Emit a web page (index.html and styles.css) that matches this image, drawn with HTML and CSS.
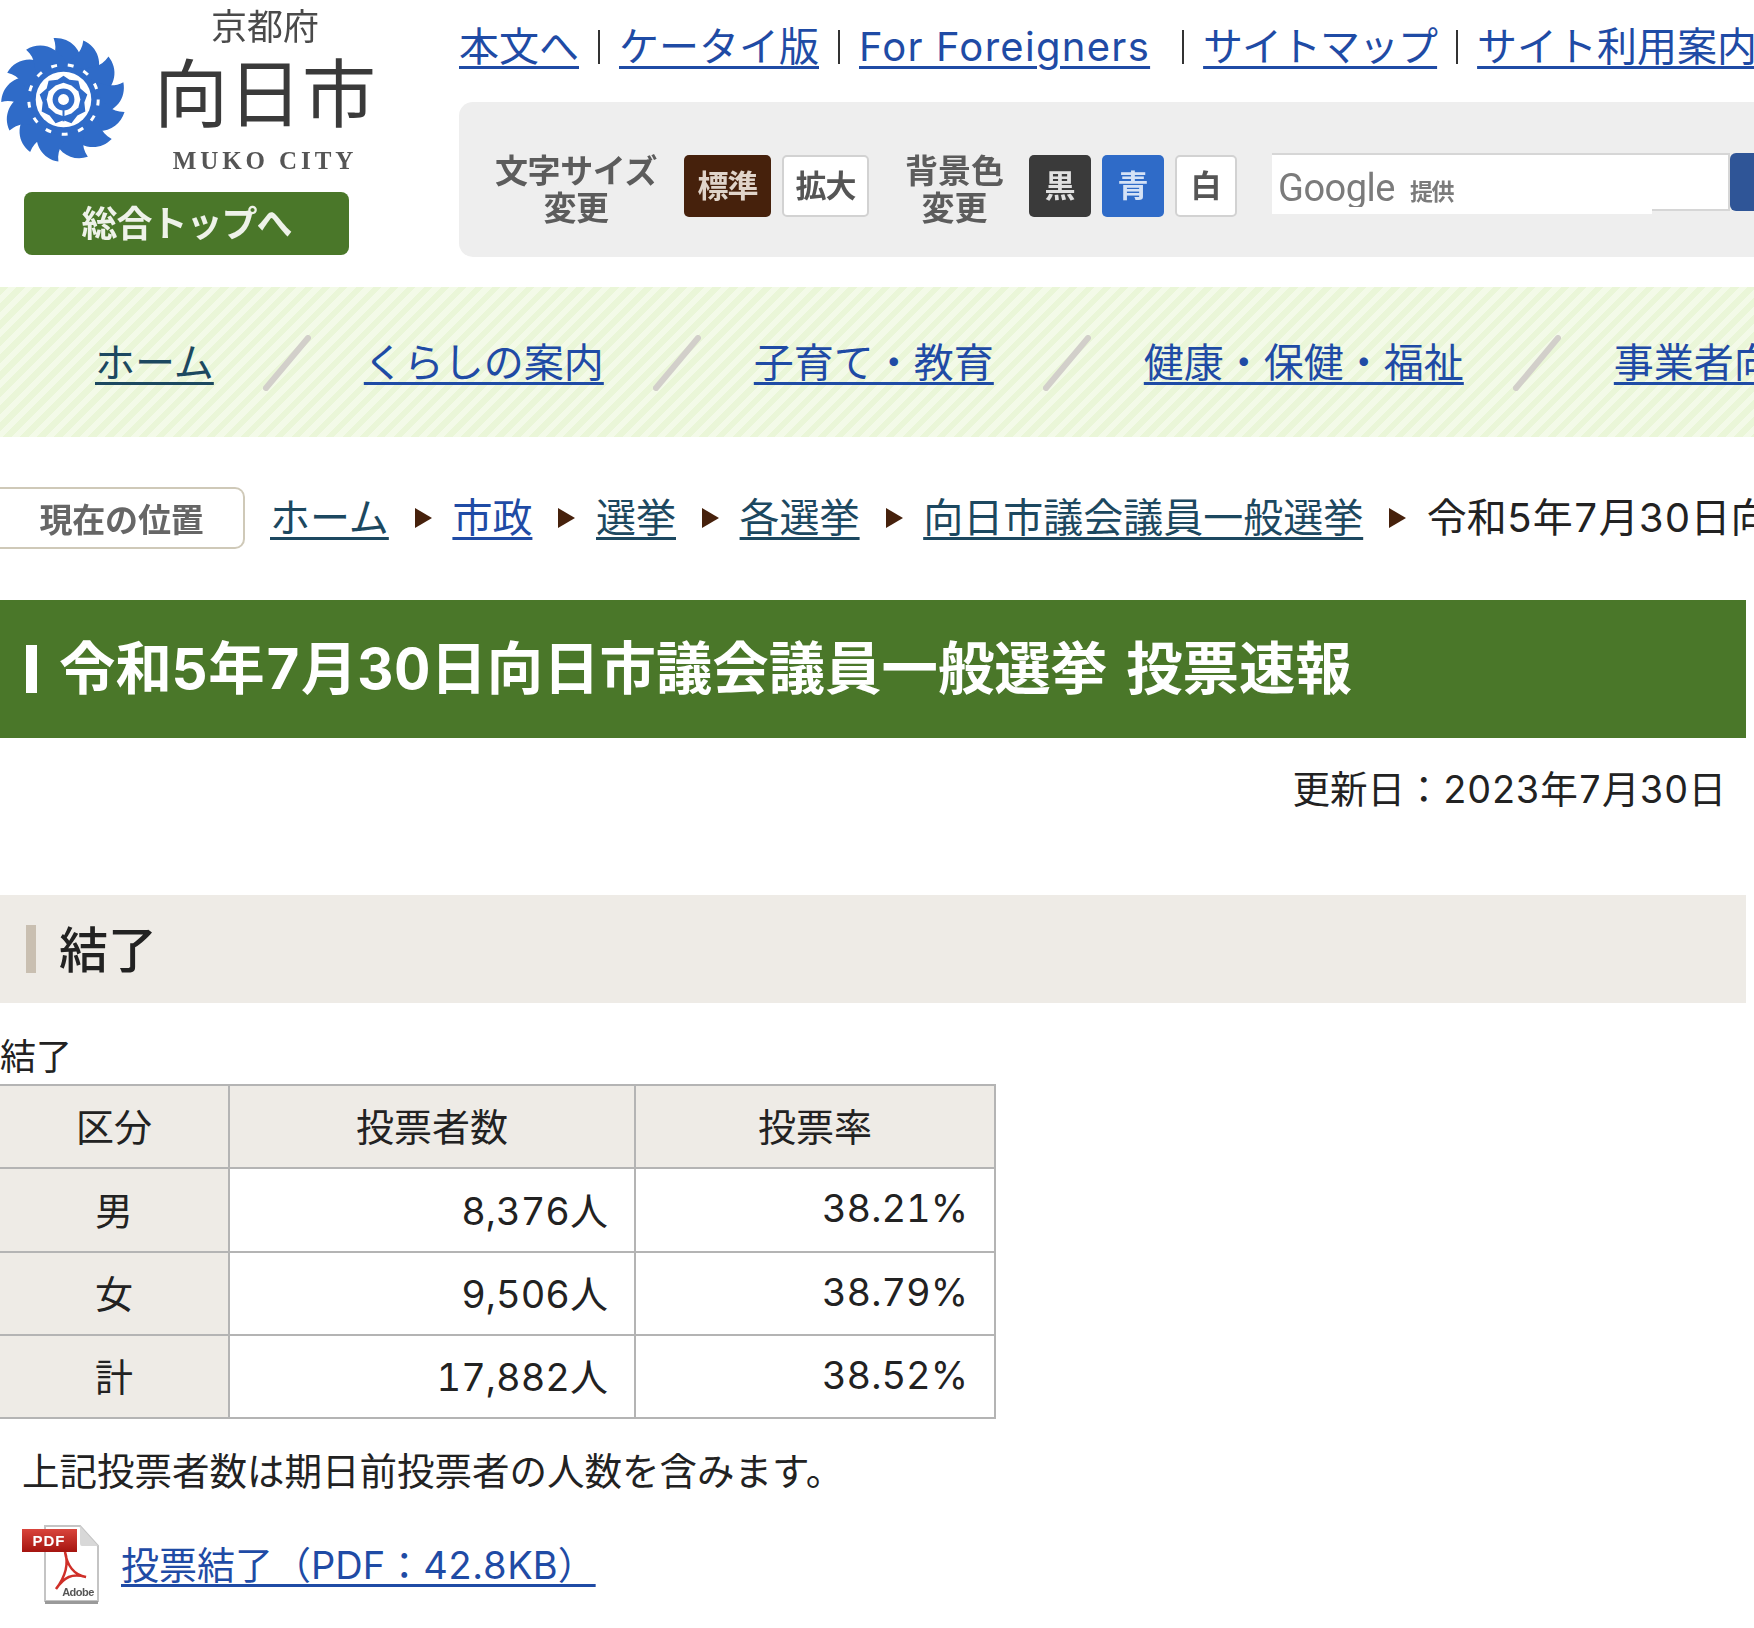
FILE: index.html
```html
<!DOCTYPE html>
<html lang="ja">
<head>
<meta charset="utf-8">
<title>令和5年7月30日向日市議会議員一般選挙 投票速報</title>
<link rel="stylesheet" href="styles.css">
</head>
<body>
<div class="page">
  <header class="header">
    <div class="logo-col">
      <div class="logo">
        <svg class="gear" viewBox="-64 -64 128 128" aria-hidden="true">
          <defs>
            <path id="tooth" d="M-17 -30 C-11 -40 -5 -49 -10 -62 C6 -63 19 -52 20 -30 Z"/>
          </defs>
          <g fill="#2f6bc8">
            <circle r="40"/>
            <use href="#tooth"/>
            <use href="#tooth" transform="rotate(27.69)"/>
            <use href="#tooth" transform="rotate(55.38)"/>
            <use href="#tooth" transform="rotate(83.08)"/>
            <use href="#tooth" transform="rotate(110.77)"/>
            <use href="#tooth" transform="rotate(138.46)"/>
            <use href="#tooth" transform="rotate(166.15)"/>
            <use href="#tooth" transform="rotate(193.85)"/>
            <use href="#tooth" transform="rotate(221.54)"/>
            <use href="#tooth" transform="rotate(249.23)"/>
            <use href="#tooth" transform="rotate(276.92)"/>
            <use href="#tooth" transform="rotate(304.62)"/>
            <use href="#tooth" transform="rotate(332.31)"/>
          </g>
          <circle class="gear-ticks" r="35"/>
          <circle r="32" fill="#2f6bc8"/>
          <circle r="28" fill="#fff"/>
          <polygon points="0,-24 6,-20 15,-19 17,-11 24,-5 21,3 22,12 14,16 8,24 0,21 -8,24 -14,16 -22,12 -21,3 -24,-5 -17,-11 -15,-19 -6,-20" fill="#2f6bc8"/>
          <polygon points="0,-17 8,-14 15,-8 17,0 15,8 8,14 0,17 -8,14 -15,8 -17,0 -15,-8 -8,-14" fill="#fff"/>
          <rect x="-1" y="10" width="2" height="12" fill="#2f6bc8"/>
          <circle r="11" fill="#2f6bc8"/>
          <circle r="5.5" fill="#fff"/>
        </svg>
        <div class="logo-text">
          <span class="logo-pref">京都府</span>
          <span class="logo-city">向日市</span>
          <span class="logo-en">MUKO CITY</span>
        </div>
      </div>
      <a class="top-btn">総合トップへ</a>
    </div>
    <div class="header-main">
      <ul class="util">
        <li><a href="#">本文へ</a></li>
        <li class="sep"></li>
        <li><a href="#">ケータイ版</a></li>
        <li class="sep"></li>
        <li class="foreign"><a href="#">For Foreigners</a></li>
        <li class="sep"></li>
        <li class="tight"><a href="#">サイトマップ</a></li>
        <li class="sep"></li>
        <li class="nowrap"><a href="#">サイト利用案内</a></li>
      </ul>
      <div class="tools">
        <div class="tool-label size-label">文字サイズ<br>変更</div>
        <button class="tbtn t-brown">標準</button>
        <button class="tbtn t-white">拡大</button>
        <div class="tool-label color-label">背景色<br>変更</div>
        <button class="cbtn t-black">黒</button>
        <button class="cbtn t-blue">青</button>
        <button class="cbtn t-white">白</button>
        <div class="search">
          <div class="search-box"><span class="google">Google</span><span class="teikyo">提供</span></div>
          <div class="search-go"></div>
        </div>
      </div>
    </div>
  </header>

  <nav class="gnav">
    <a class="home" href="#">ホーム</a>
    <svg class="slash" viewBox="0 0 48 56" aria-hidden="true"><line x1="3" y1="53" x2="45" y2="3"/></svg>
    <a href="#">くらしの案内</a>
    <svg class="slash" viewBox="0 0 48 56" aria-hidden="true"><line x1="3" y1="53" x2="45" y2="3"/></svg>
    <a href="#">子育て・教育</a>
    <svg class="slash" viewBox="0 0 48 56" aria-hidden="true"><line x1="3" y1="53" x2="45" y2="3"/></svg>
    <a href="#">健康・保健・福祉</a>
    <svg class="slash" viewBox="0 0 48 56" aria-hidden="true"><line x1="3" y1="53" x2="45" y2="3"/></svg>
    <a href="#">事業者向け</a>
  </nav>

  <div class="crumbs">
    <span class="here">現在の位置</span>
    <a class="dark" href="#">ホーム</a><i class="tri"></i>
    <a href="#">市政</a><i class="tri"></i>
    <a class="dark" href="#">選挙</a><i class="tri"></i>
    <a class="dark" href="#">各選挙</a><i class="tri"></i>
    <a class="dark" href="#">向日市議会議員一般選挙</a><i class="tri"></i>
    <span class="cur">令和5年7月30日向日市議会議員一般選挙 投票速報</span>
  </div>

  <main class="content">
    <h1 class="title"><span class="title-bar"></span>令和5年7月30日向日市議会議員一般選挙 投票速報</h1>
    <p class="date">更新日：2023年7月30日</p>
    <h2 class="section"><span class="section-bar"></span>結了</h2>
    <p class="caption">結了</p>
    <table class="result">
      <thead>
        <tr><th class="c1">区分</th><th class="c2">投票者数</th><th class="c3">投票率</th></tr>
      </thead>
      <tbody>
        <tr class="row-tall"><th>男</th><td>8,376人</td><td>38.21%</td></tr>
        <tr><th>女</th><td>9,506人</td><td>38.79%</td></tr>
        <tr><th>計</th><td>17,882人</td><td>38.52%</td></tr>
      </tbody>
    </table>
    <p class="note">上記投票者数は期日前投票者の人数を含みます。</p>
    <p class="file">
      <svg class="pdf" viewBox="0 0 80 80" aria-hidden="true">
        <defs>
          <linearGradient id="red" x1="0" y1="0" x2="0" y2="1"><stop offset="0" stop-color="#d9453c"/><stop offset="1" stop-color="#a5140f"/></linearGradient>
        </defs>
        <path d="M25 1 H60 L78 21 V76 H25 Z" fill="#fff" stroke="#c4c4c4" stroke-width="2"/>
        <rect x="25" y="76" width="53" height="3" fill="#9a9a9a"/>
        <path d="M60 1 L78 21 H62 Q60 21 60 18 Z" fill="#d8d8d8"/>
        <path d="M45 27 C50 42 42 56 36 64 C44 52 52 48 66 52 C54 50 47 40 45 27 Z" fill="none" stroke="#cf2f28" stroke-width="2.5"/>
        <rect x="2" y="4" width="55" height="23" fill="url(#red)"/>
        <text class="pdf-t" x="29" y="21" text-anchor="middle">PDF</text>
        <text class="adobe-t" x="58" y="71" text-anchor="middle">Adobe</text>
      </svg>
      <a href="#">投票結了（PDF：42.8KB）</a>
    </p>
  </main>
</div>
</body>
</html>
```
FILE: styles.css
```css
* { box-sizing: border-box; }
html, body { margin: 0; padding: 0; background: #fff; }
body {
  font-family: "Inter", "Noto Sans CJK JP", sans-serif;
  font-variant-numeric: tabular-nums;
  color: #222;
}
.page { width: 1754px; height: 1628px; overflow: hidden; }
a { color: #1f4ba5; text-decoration: underline; text-decoration-thickness: 3px; text-underline-offset: 5px; }

.header { display: flex; height: 287px; }
.logo-col { width: 459px; flex: none; display: flex; flex-direction: column; }
.logo { display: flex; height: 192px; }
.gear { width: 127px; height: 127px; margin: 36px 0 0; flex: none; filter: blur(.5px); }
.gear-ticks { fill: none; stroke: #fff; stroke-width: 3; stroke-dasharray: 6 10.9; }
.logo-text { display: flex; flex-direction: column; align-items: center; width: 222px; margin-left: 27px; color: #3a3a3a; }
.logo-pref { font-size: 36px; line-height: 40px; margin-top: 7px; font-weight: 400; color: #4a4a4a; filter: blur(.4px); }
.logo-city { font-size: 74px; line-height: 84px; margin-top: 5px; font-weight: 400; filter: blur(.4px); }
.logo-en { font-family: "Liberation Serif", serif; font-weight: 700; font-size: 25px; letter-spacing: 3.9px; line-height: 26px; margin-top: 12px; color: #555; filter: blur(.4px); }
.top-btn {
  display: block; width: 325px; height: 63px; margin-left: 24px; border-radius: 8px;
  background: #4a7729; color: #eef2e9; font-size: 36px; font-weight: 700; line-height: 64px;
  text-align: center; text-decoration: none; letter-spacing: -1px; filter: blur(.4px);
}

.header-main { flex: 1; min-width: 0; }
.util { list-style: none; margin: 0; padding: 26px 0 0; display: flex; gap: 19px; font-size: 40px; line-height: 42px; height: 102px; white-space: nowrap; }
.util .sep { width: 2px; height: 34px; margin-top: 4px; background: #333; flex: none; }
.util .foreign { margin-right: 13px; letter-spacing: 1.3px; }
.util .tight { letter-spacing: -1px; }
.nowrap { flex: none; }

.tools { display: flex; align-items: flex-start; height: 155px; background: #eee; border-radius: 14px 0 0 14px; padding: 53px 0 0 35px; color: #444; }
.tool-label { font-size: 33px; line-height: 37px; text-align: center; font-weight: 700; color: #5c5c5c; filter: blur(.5px); flex: none; margin-top: -2px; }
.size-label { width: 164px; letter-spacing: -.4px; }
.color-label { width: 99px; margin-left: 36px; }
button { font-family: inherit; padding: 0 0 5px; flex: none; cursor: pointer; }
.tbtn, .cbtn { height: 62px; border-radius: 5px; font-size: 31px; font-weight: 700; filter: blur(.4px); }
.tbtn { width: 87px; margin-left: 26px; letter-spacing: -1px; }
.tbtn + .tbtn { margin-left: 11px; }
.cbtn { width: 62px; margin-left: 11px; }
.color-label + .cbtn { margin-left: 25px; }
.t-brown { background: #46210c; color: #e0d4ca; border: 0; }
.t-white { background: #fff; color: #555; border: 2px solid #d2d2d2; }
.t-black { background: #3a3a3a; color: #e0e0e0; border: 0; }
.t-blue { background: #2f6bc8; color: #d5e2f6; border: 0; }

.search { display: flex; margin-left: 35px; flex: none; }
.search-box {
  position: relative;
  width: 458px; height: 58px; background: #fff; border: solid #d6d6d6; border-width: 2px 2px 2px 0;
  display: flex; align-items: center; padding: 12px 0 0 6px; color: #7b7b7b; margin-top: -2px;
}
.search-box::after { content: ""; position: absolute; left: 0; bottom: -5px; width: 380px; height: 7px; background: #fff; }
.google { font-family: "Roboto", sans-serif; font-size: 38px; letter-spacing: -.5px; filter: blur(.4px); }
.teikyo { font-size: 23px; font-weight: 700; margin: 4px 0 0 15px; letter-spacing: -1.5px; filter: blur(.4px); }
.search-go { width: 40px; height: 58px; background: #2f5597; border-radius: 6px 0 0 6px; margin-top: -2px; }

.gnav {
  height: 150px; display: flex; align-items: center; padding: 0 0 5px 95px; font-size: 40px; white-space: nowrap;
  background: repeating-linear-gradient(135deg, #eaf6d8 0 6px, #f3fae8 6px 12px);
}
.gnav a { flex: none; }
.gnav .home, .crumbs .dark { color: #1c4860; }
.slash { width: 48px; height: 56px; margin: 6px 53px 0 49px; flex: none; }
.slash line { stroke: #d2cfca; stroke-width: 6px; stroke-linecap: round; }

.crumbs { display: flex; align-items: center; height: 62px; margin-top: 50px; font-size: 40px; white-space: nowrap; }
.crumbs > a, .cur { position: relative; top: -3px; }
.here {
  width: 245px; height: 62px; border: 2px solid #cfc9b8; border-left: 0; border-radius: 0 10px 10px 0; flex: none; margin-right: 25px;
  font-size: 33px; line-height: 62px; text-align: center; font-weight: 700; color: #666; letter-spacing: -.2px; filter: blur(.5px);
}
.crumbs a, .cur { flex: none; }
.tri { width: 0; height: 0; border-left: 17px solid #46210c; border-top: 10px solid transparent; border-bottom: 10px solid transparent; margin: 0 20.6px 0 26px; flex: none; }
.cur { color: #222; }

.content { width: 1746px; }
.title {
  margin: 51px 0 0; height: 138px; padding-bottom: 9px; background: #4a7729; color: #fff; font-size: 56.4px; font-weight: 700;
  display: flex; align-items: center; white-space: pre; word-spacing: 4px;
}
.title-bar { width: 11px; height: 48px; background: #fff; margin: 9px 22px 0 26px; flex: none; }
.date { margin: 0; padding-top: 29px; height: 157px; text-align: right; padding-right: 20px; font-size: 37.6px; line-height: 46px; }
.section { margin: 0; height: 108px; padding-bottom: 5px; background: #eeebe6; font-size: 49px; font-weight: 500; display: flex; align-items: center; }
.section-bar { width: 10px; height: 48px; background: #c9bfb1; margin: 5px 23px 0 26px; flex: none; }
.caption { margin: 0; padding-top: 31px; height: 81px; font-size: 36px; line-height: 46px; }
.result { border-collapse: collapse; width: 995px; table-layout: fixed; font-size: 38px; }
.result th, .result td { border: 2px solid #b4b4b4; height: 83px; padding: 0 0 4px; font-weight: 400; }
.result .row-tall > * { height: 84px; }
.result tr > :first-child { border-left: 0; }
.result th { background: #eeebe6; text-align: center; }
.result td { text-align: right; padding-right: 26px; }
.c1 { width: 229px; }
.c2 { width: 406px; }
.c3 { width: 360px; }
.note { margin: 30px 0 0 22px; font-size: 37.5px; line-height: 46px; }
.file { margin: 30px 0 0 20px; display: flex; align-items: flex-start; font-size: 38px; }
.pdf { width: 80px; height: 80px; flex: none; filter: blur(.4px); }
.file a { margin: 17px 0 0 21px; line-height: 46px; }
.pdf-t { font: 700 15px "Liberation Sans", sans-serif; fill: #fff; letter-spacing: 1px; }
.adobe-t { font: 700 11px "Liberation Sans", sans-serif; fill: #555; letter-spacing: -.5px; }
```
